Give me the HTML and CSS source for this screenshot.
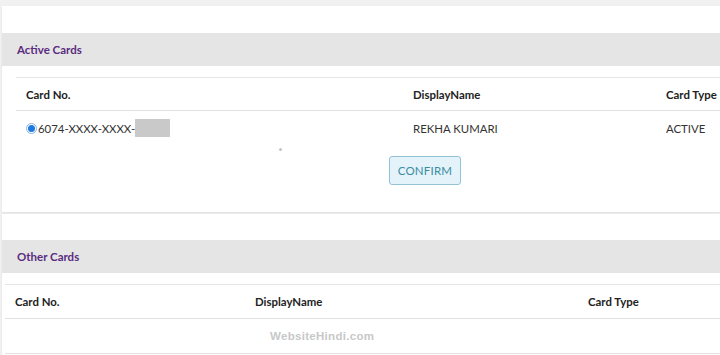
FILE: index.html
```html
<!DOCTYPE html>
<html>
<head>
<meta charset="utf-8">
<link rel="stylesheet" href="styles.css">
</head>
<body>
<div class="page">
  <section class="card card-active">
    <div class="band"><h2 class="band-title">Active Cards</h2></div>
    <div class="table-wrap t1">
      <div class="row head">
        <div class="c1">Card No.</div>
        <div class="c2">DisplayName</div>
        <div class="c3">Card Type</div>
      </div>
      <div class="row body">
        <div class="c1 cardno">
          <span class="radio"><span class="dot"></span></span>
          <span>6074-XXXX-XXXX-</span><span class="mask"></span>
        </div>
        <div class="c2">REKHA KUMARI</div>
        <div class="c3">ACTIVE</div>
      </div>
      <div class="actions">
        <span class="speck"></span>
        <button class="btn">CONFIRM</button>
      </div>
    </div>
  </section>
  <section class="card card-other">
    <div class="band"><h2 class="band-title">Other Cards</h2></div>
    <div class="table-wrap t2">
      <div class="row head">
        <div class="c1">Card No.</div>
        <div class="c2">DisplayName</div>
        <div class="c3">Card Type</div>
      </div>
      <div class="row empty">
        <span class="watermark">WebsiteHindi.com</span>
      </div>
    </div>
  </section>
</div>
</body>
</html>
```
FILE: styles.css
```css
html, body {
  margin: 0;
  padding: 0;
}
body {
  background: #f1f1f1;
  font-family: Lato, "Noto Sans", sans-serif;
  color: #222;
  overflow: hidden;
  width: 720px;
  height: 355px;
}
.page {
  padding-top: 6px;
  padding-left: 2px;
  width: 718px;
  overflow: hidden;
}
.card {
  background: #fff;
  box-shadow: 0 1px 2px rgba(0,0,0,0.08);
  overflow: hidden;
}
.card-active {
  padding-top: 27px;
  height: 179px;
}
.card-other {
  margin-top: 2px;
  padding-top: 26px;
  height: 117px;
}
.band {
  background: #e5e5e5;
  height: 33px;
  display: flex;
  align-items: center;
  padding-left: 15px;
}
.band-title {
  margin: 0;
  font-size: 11.5px;
  font-weight: 700;
  color: #5a2c80;
}
.table-wrap {
  margin-top: 11px;
  border-top: 1px solid #e6e6e6;
  width: 800px;
}
.t1 { margin-left: 14px; }
.t2 { margin-left: 3px; }
.row {
  display: flex;
  align-items: center;
  font-size: 11.4px;
}
.row.head {
  height: 32px;
  border-bottom: 1px solid #e2e2e2;
  font-weight: 700;
  color: #222;
}
.row.body {
  height: 34px;
  color: #333;
}
.t2 .row.head { height: 33px; }
.t1 .c1 { width: 387px; padding-left: 10px; box-sizing: border-box; }
.t1 .c2 { width: 253px; padding-left: 10px; box-sizing: border-box; }
.t1 .c3 { padding-left: 10px; }
.t2 .c1 { width: 240px; padding-left: 10px; box-sizing: border-box; }
.t2 .c2 { width: 333px; padding-left: 10px; box-sizing: border-box; }
.t2 .c3 { padding-left: 10px; }
.cardno {
  display: flex;
  align-items: center;
}
.radio {
  width: 9px;
  height: 9px;
  border-radius: 50%;
  border: 1px solid #8ab6e0;
  background: #fff;
  display: inline-flex;
  align-items: center;
  justify-content: center;
  margin-right: 1px;
}
.dot {
  width: 7px;
  height: 7px;
  border-radius: 50%;
  background: #1e7ae0;
}
.mask {
  display: inline-block;
  width: 35px;
  height: 18px;
  background: #c9c9c9;
}
.actions {
  position: relative;
  height: 66px;
}
.speck {
  position: absolute;
  left: 263px;
  top: 3px;
  width: 3px;
  height: 3px;
  border-radius: 50%;
  background: #c4c4c4;
}
.btn {
  position: absolute;
  left: 373px;
  top: 11px;
  width: 72px;
  height: 29px;
  background: #e3f3f9;
  border: 1px solid #93c3d2;
  border-radius: 3px;
  color: #3b8ba3;
  font-family: Lato, "Noto Sans", sans-serif;
  font-size: 11.5px;
  font-weight: 400;
  letter-spacing: 0.2px;
  padding: 0;
}
.row.empty {
  height: 34px;
  border-bottom: 1px solid #e2e2e2;
  justify-content: flex-start;
}
.watermark {
  margin-left: 265px;
  color: #c8c8c8;
  font-family: "Liberation Sans", Arial, sans-serif;
  font-weight: 700;
  font-size: 11.5px;
  letter-spacing: 0.3px;
}
```
